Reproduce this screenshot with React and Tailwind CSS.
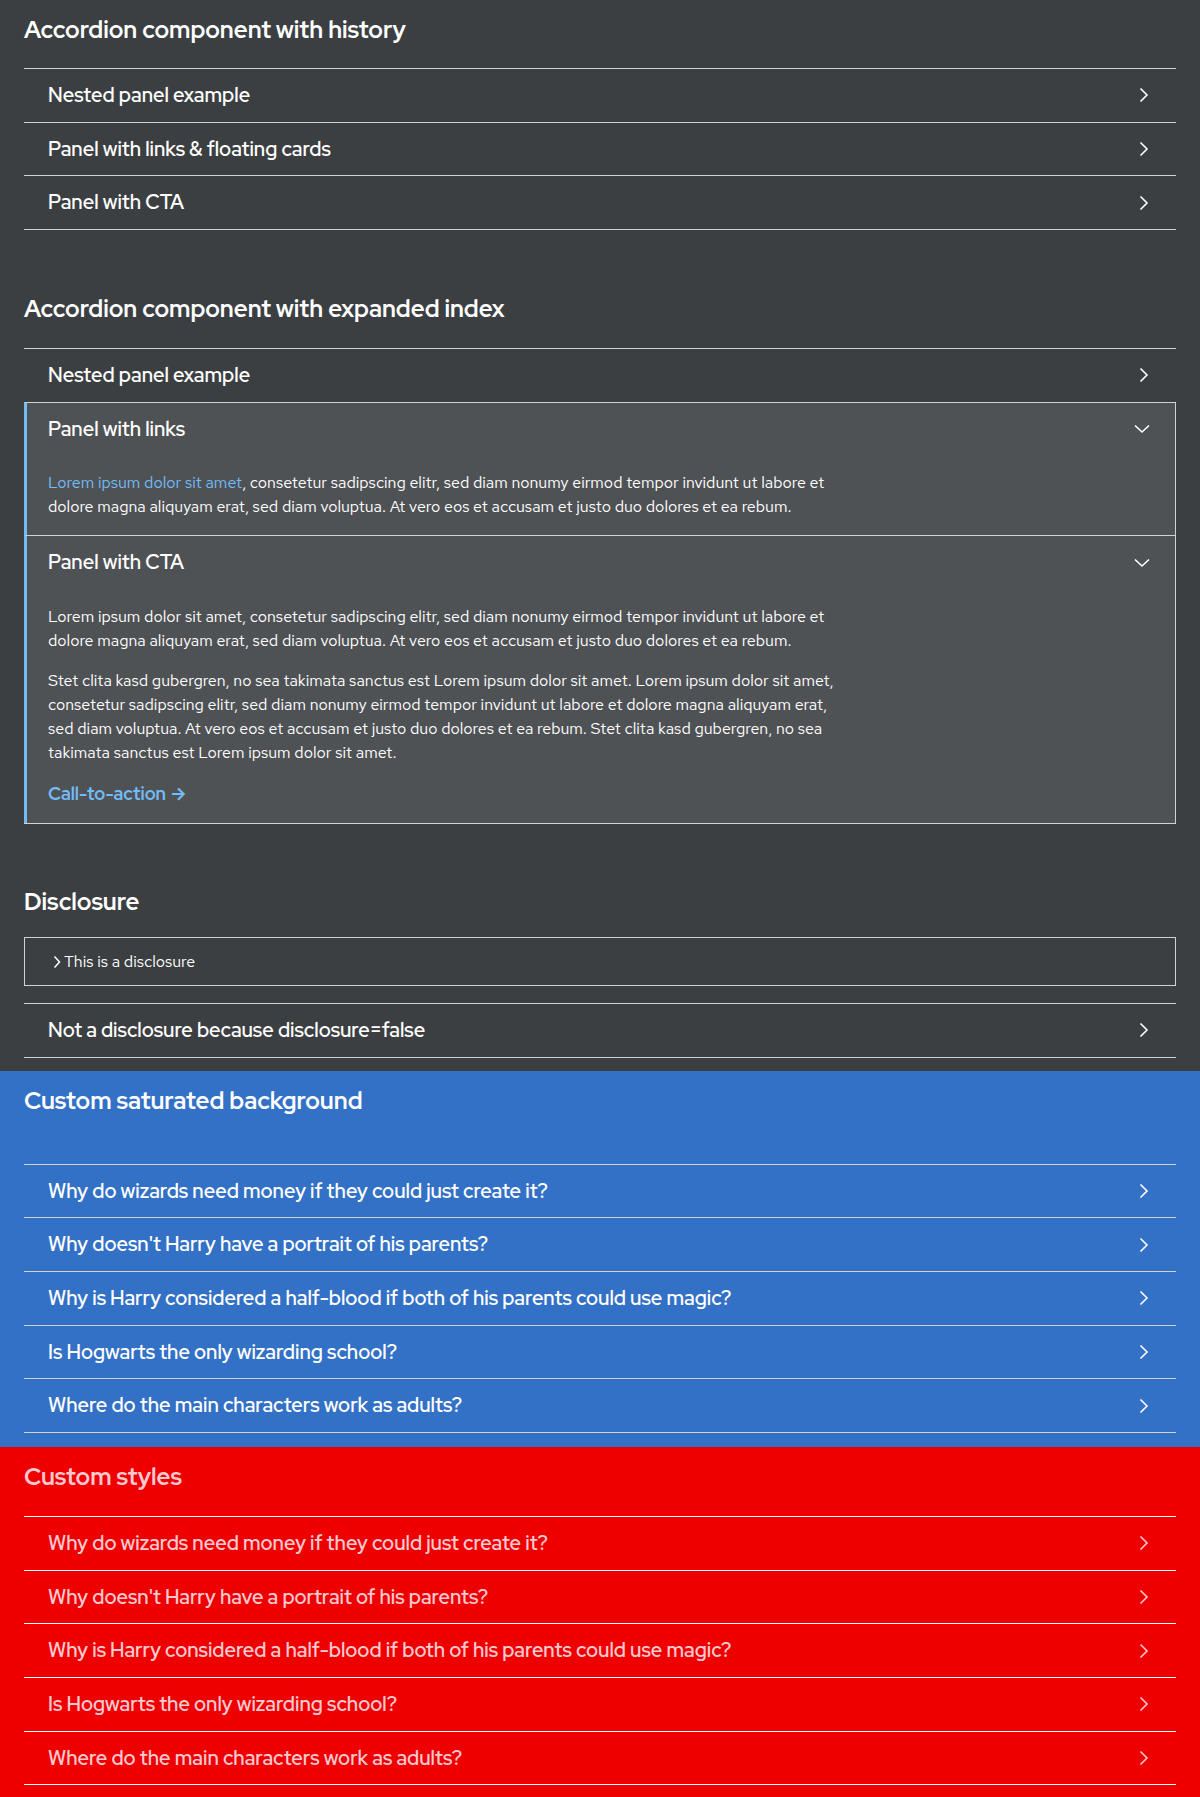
const textFont = { fontFamily: '"Red Hat Text", Inter, "Noto Sans", sans-serif' };
const displayFont = { fontFamily: '"Red Hat Display", "Red Hat Text", Inter, "Noto Sans", sans-serif' };

const LOREM_SHORT =
  'consetetur sadipscing elitr, sed diam nonumy eirmod tempor invidunt ut labore et dolore magna aliquyam erat, sed diam voluptua. At vero eos et accusam et justo duo dolores et ea rebum.';
const LOREM_LONG =
  'Stet clita kasd gubergren, no sea takimata sanctus est Lorem ipsum dolor sit amet. Lorem ipsum dolor sit amet, consetetur sadipscing elitr, sed diam nonumy eirmod tempor invidunt ut labore et dolore magna aliquyam erat, sed diam voluptua. At vero eos et accusam et justo duo dolores et ea rebum. Stet clita kasd gubergren, no sea takimata sanctus est Lorem ipsum dolor sit amet.';

const FAQ = [
  'Why do wizards need money if they could just create it?',
  "Why doesn't Harry have a portrait of his parents?",
  'Why is Harry considered a half-blood if both of his parents could use magic?',
  'Is Hogwarts the only wizarding school?',
  'Where do the main characters work as adults?',
];

function ChevronRight({ className = '' }) {
  return (
    <svg width="16" height="16" viewBox="0 0 16 16" className={className} fill="none">
      <polyline points="4.5,1.5 11,8 4.5,14.5" stroke="currentColor" strokeWidth="1.6" />
    </svg>
  );
}

function ChevronDown({ className = '' }) {
  return (
    <svg width="18" height="16" viewBox="0 0 18 16" className={className} fill="none">
      <polyline points="2,4.5 9,11 16,4.5" stroke="currentColor" strokeWidth="1.6" />
    </svg>
  );
}

function Row({ title, line = 'border-[#d2d2d2]', text = 'text-white' }) {
  return (
    <div className={`border-t ${line}`}>
      <button
        style={displayFont}
        className={`w-full flex items-center justify-between pl-6 pr-6 py-4 text-left text-[20px] leading-[20.67px] font-semibold ${text}`}
      >
        <span>{title}</span>
        <ChevronRight />
      </button>
    </div>
  );
}

function ExpandedRow({ title, children }) {
  return (
    <div className="border-t border-[#d2d2d2] border-l-[3px] border-l-[#73bcf7] border-r border-r-[#d2d2d2] bg-[#4f5255]">
      <button
        style={displayFont}
        className="w-full flex items-center justify-between pl-[21px] pr-6 py-4 text-left text-[20px] leading-[20.67px] font-semibold text-white"
      >
        <span>{title}</span>
        <ChevronDown />
      </button>
      <div className="pl-[21px] pr-6 pt-4 pb-4 flex flex-col gap-4 text-white text-base leading-6">{children}</div>
    </div>
  );
}

function Heading({ children, className = '' }) {
  return (
    <h2 style={displayFont} className={`text-[24px] leading-8 font-bold ${className}`}>
      {children}
    </h2>
  );
}

export default function App() {
  return (
    <div style={textFont} className="w-[1200px] min-h-[1797px]">
      <section className="bg-[#3c3f42] px-6 pt-[14px] pb-[13px] text-white">
        <Heading className="mb-[22px]">Accordion component with history</Heading>
        <div className="border-b border-[#d2d2d2]">
          <Row title="Nested panel example" />
          <Row title="Panel with links & floating cards" />
          <Row title="Panel with CTA" />
        </div>

        <Heading className="mt-[63px] mb-[23px]">Accordion component with expanded index</Heading>
        <div className="border-b border-[#d2d2d2]">
          <Row title="Nested panel example" />
          <ExpandedRow title="Panel with links">
            <p className="max-w-[800px]">
              <a className="text-[#73bcf7]">Lorem ipsum dolor sit amet</a>, {LOREM_SHORT}
            </p>
          </ExpandedRow>
          <ExpandedRow title="Panel with CTA">
            <p className="max-w-[800px]">Lorem ipsum dolor sit amet, {LOREM_SHORT}</p>
            <p className="max-w-[800px]">{LOREM_LONG}</p>
            <a style={displayFont} className="text-[#73bcf7] font-bold text-[18px] leading-[26px]">
              Call-to-action →
            </a>
          </ExpandedRow>
        </div>

        <Heading className="mt-[62px] mb-[19px]">Disclosure</Heading>
        <div className="border border-[#d2d2d2] h-[49px] flex items-center pl-[28px] text-[16px] gap-[3px]">
          <svg width="8" height="14" viewBox="0 0 8 14" fill="none">
            <polyline points="1.5,1.5 6.5,7 1.5,12.5" stroke="currentColor" strokeWidth="1.5" />
          </svg>
          <span>This is a disclosure</span>
        </div>
        <div className="border-b border-[#d2d2d2] mt-[17px]">
          <Row title="Not a disclosure because disclosure=false" />
        </div>
      </section>

      <section className="bg-[#3371c6] px-6 pt-[14px] pb-[14px] text-white">
        <Heading className="mb-[47px]">Custom saturated background</Heading>
        <div className="border-b border-[#d2d2d2]">
          {FAQ.map((q) => (
            <Row key={q} title={q} />
          ))}
        </div>
      </section>

      <section className="bg-[#ee0000] px-6 pt-[14px] pb-[14px] text-[#ffc9d0]">
        <Heading className="mb-[23px]">Custom styles</Heading>
        <div className="border-b border-white">
          {FAQ.map((q) => (
            <Row key={q} title={q} line="border-white" text="text-[#ffc9d0]" />
          ))}
        </div>
      </section>
    </div>
  );
}
